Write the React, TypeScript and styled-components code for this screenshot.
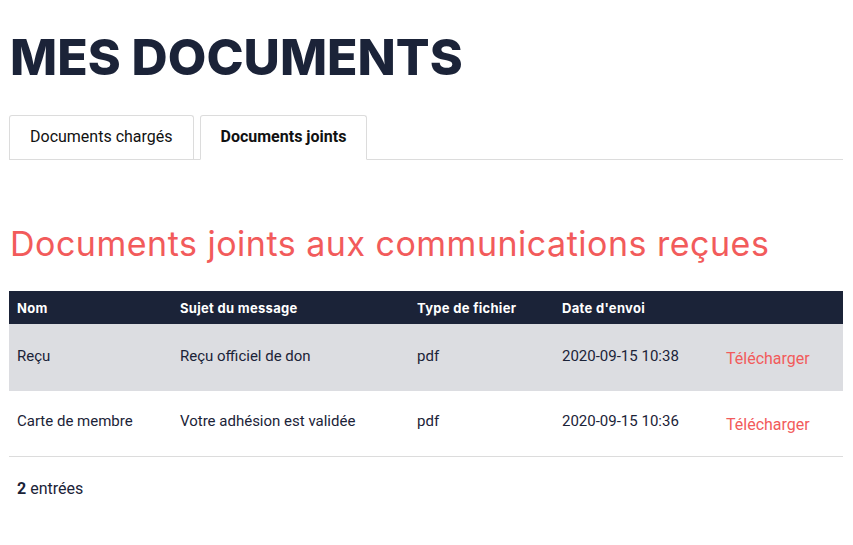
import React from "react";
import styled, { createGlobalStyle } from "styled-components";

const Global = createGlobalStyle`
  html, body { margin: 0; padding: 0; background: #fff; }
  body { font-family: Roboto, "Liberation Sans", sans-serif; color: #1b2338; }
`;

const Page = styled.div`
  padding: 26px 10px 0 9px;
`;

const Title = styled.h1`
  margin: 0 0 0 1px;
  font-family: Inter, "DejaVu Sans", sans-serif;
  font-weight: 800;
  font-size: 50px;
  line-height: 62px;
  letter-spacing: 0;
  color: #1b2338;
`;

const Tabs = styled.div`
  display: flex;
  gap: 6px;
  margin-top: 27px;
  border-bottom: 1px solid #dcdcdc;
  height: 44px;
`;

const Tab = styled.button<{ $active?: boolean }>`
  box-sizing: border-box;
  height: ${(p) => (p.$active ? "45px" : "44px")};
  padding: 0 20px 3px;
  background: #fff;
  border: 1px solid #dcdcdc;
  border-bottom: ${(p) => (p.$active ? "1px solid #fff" : "none")};
  border-radius: 3px 3px 0 0;
  font-family: Roboto, sans-serif;
  font-size: 16px;
  font-weight: ${(p) => (p.$active ? 700 : 400)};
  color: #111;
  cursor: pointer;
`;

const Subtitle = styled.h2`
  margin: 64px 0 0 1px;
  font-family: Inter, "DejaVu Sans", sans-serif;
  font-weight: 400;
  font-size: 34px;
  line-height: 40px;
  letter-spacing: 0.5px;
  color: #f25b5b;
`;

const Table = styled.table`
  margin-top: 27px;
  width: 100%;
  border-collapse: collapse;
  table-layout: fixed;
`;

const Th = styled.th<{ $w?: number }>`
  width: ${(p) => (p.$w ? `${p.$w}px` : "auto")};
  background: #1b2338;
  color: #fff;
  text-align: left;
  font-family: Inter, "DejaVu Sans", sans-serif;
  font-weight: 700;
  font-size: 13px;
  letter-spacing: 0.3px;
  height: 33px;
  padding: 0 8px;
`;

const Tr = styled.tr<{ $shaded?: boolean }>`
  background: ${(p) => (p.$shaded ? "#dcdde1" : "#fff")};
  &:last-child td { border-bottom: 1px solid #dcdcdc; }
`;

const Td = styled.td<{ $h: number }>`
  font-size: 15px;
  color: #1b2338;
  padding: 0 8px 4px;
  height: ${(p) => p.$h}px;
  box-sizing: border-box;
  vertical-align: middle;
`;

const Download = styled.a`
  display: inline-block;
  color: #f25b5b;
  font-size: 16px;
  padding-top: 6px;
  text-decoration: none;
  cursor: pointer;
`;

const Footer = styled.div`
  margin-top: 22px;
  padding-left: 8px;
  font-size: 16px;
  color: #1b2338;
`;

const rows = [
  { nom: "Reçu", sujet: "Reçu officiel de don", type: "pdf", date: "2020-09-15 10:38", h: 67 },
  { nom: "Carte de membre", sujet: "Votre adhésion est validée", type: "pdf", date: "2020-09-15 10:36", h: 65 },
];

export default function App() {
  return (
    <>
      <Global />
      <Page>
        <Title>MES DOCUMENTS</Title>
        <Tabs>
          <Tab>Documents chargés</Tab>
          <Tab $active>Documents joints</Tab>
        </Tabs>
        <Subtitle>Documents joints aux communications reçues</Subtitle>
        <Table>
          <thead>
            <tr>
              <Th $w={147}>Nom</Th>
              <Th $w={221}>Sujet du message</Th>
              <Th $w={129}>Type de fichier</Th>
              <Th $w={148}>Date d'envoi</Th>
              <Th />
            </tr>
          </thead>
          <tbody>
            {rows.map((r, i) => (
              <Tr key={i} $shaded={i === 0}>
                <Td $h={r.h}>{r.nom}</Td>
                <Td $h={r.h}>{r.sujet}</Td>
                <Td $h={r.h}>{r.type}</Td>
                <Td $h={r.h}>{r.date}</Td>
                <Td $h={r.h}>
                  <Download>Télécharger</Download>
                </Td>
              </Tr>
            ))}
          </tbody>
        </Table>
        <Footer>
          <b>2</b> entrées
        </Footer>
      </Page>
    </>
  );
}
